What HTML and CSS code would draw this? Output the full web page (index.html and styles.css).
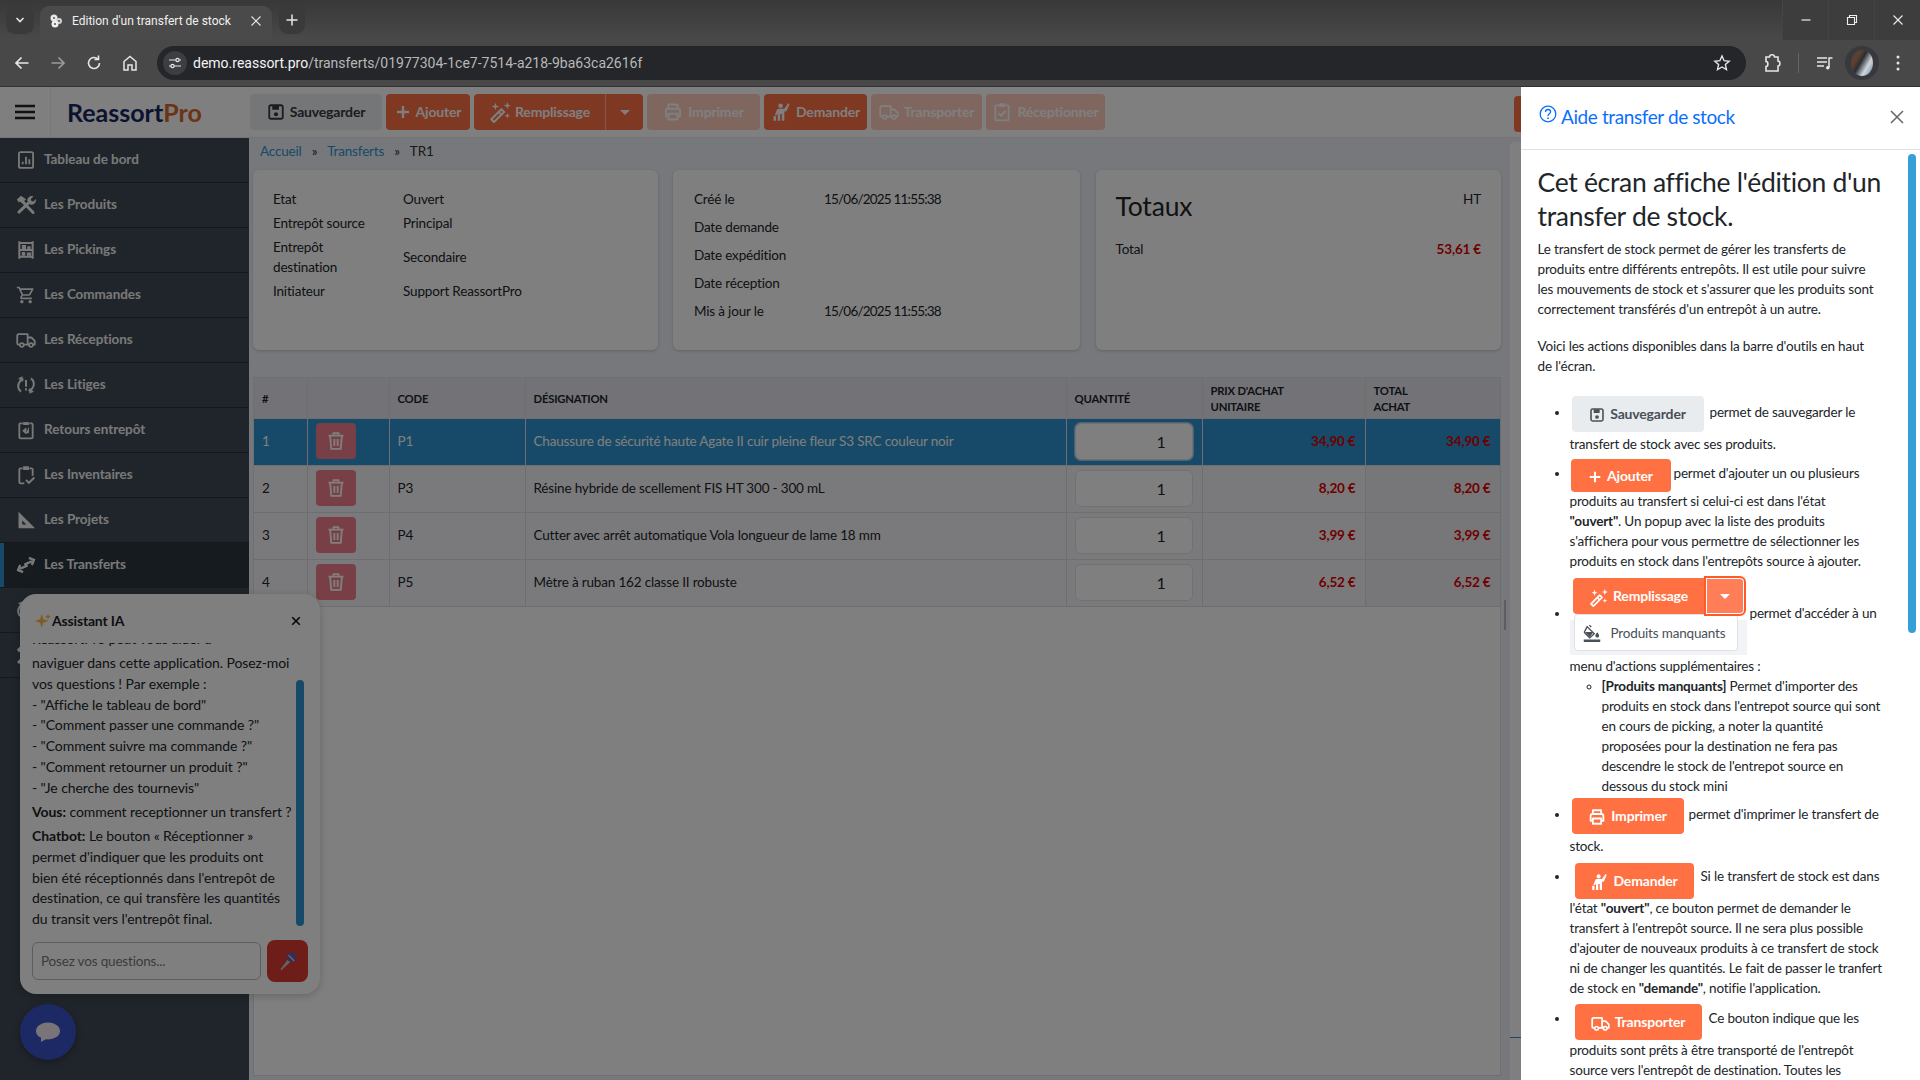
FILE: index.html
```html
<!DOCTYPE html>
<html lang="fr">
<head>
<meta charset="utf-8">
<title>Edition d'un transfert de stock</title>
<link rel="stylesheet" href="styles.css">
</head>
<body>
<svg class="sprite" xmlns="http://www.w3.org/2000/svg">
  <symbol id="i-chart" viewBox="0 0 24 24"><rect x="3.5" y="2.5" width="17" height="19" rx="2" fill="none" stroke="currentColor" stroke-width="2.2"/><path d="M8 17v-3M12 17V8M16 17v-6" stroke="currentColor" stroke-width="2.2" fill="none"/></symbol>
  <symbol id="i-tools" viewBox="0 0 24 24"><path d="M7 7 20.500 21" stroke="currentColor" stroke-width="3.600" fill="none" stroke-linecap="round"/><path d="M16 8.500 3.500 20.500" stroke="currentColor" stroke-width="3.600" fill="none" stroke-linecap="round"/><path d="M1 5.500 6 .8 12 5 7.500 9.800l-2.500-2-1.500 1.200z" fill="currentColor"/><path d="M13.500 7c0-3.700 3.500-6.500 7.500-5.500l-3.200 3.200.7 2.400 2.400.7 3-3c.8 4-2.500 7.500-6.500 6.800z" fill="currentColor"/></symbol>
  <symbol id="i-shelf" viewBox="0 0 24 24"><path d="M4 1.500v21M20 1.500v21M4 3.500h16M4 12h16M4 20h16" stroke="currentColor" stroke-width="2.400" fill="none"/><path d="M7 6h5v5H7zM13.500 7.500h4V11h-4zM7 14.500h4V19H7zM13 15h5v4h-5z" fill="currentColor"/></symbol>
  <symbol id="i-cart" viewBox="0 0 24 24"><path fill="currentColor" d="M15.550 13c.750 0 1.410-.410 1.750-1.030l3.580-6.490A.996.996 0 0 0 20.010 4H5.210l-.940-2H1v2h2l3.600 7.590-1.350 2.440C4.520 15.370 5.480 17 7 17h12v-2H7l1.100-2h7.450zM6.160 6h12.150l-2.760 5H8.530L6.160 6zM7 18c-1.100 0-1.990.900-1.990 2S5.900 22 7 22s2-.900 2-2-.900-2-2-2zm10 0c-1.100 0-1.990.900-1.990 2s.890 2 1.990 2 2-.900 2-2-.900-2-2-2z"/></symbol>
  <symbol id="i-truck" viewBox="0 0 24 24"><path d="M5 17.500H3a1.500 1.500 0 0 1-1.500-1.500V6.500A1.500 1.500 0 0 1 3 5h11v12.500H9M14 9h4.500l4 4v4.500h-2.500M14 17.500h2" fill="none" stroke="currentColor" stroke-width="2.200" stroke-linejoin="round"/><circle cx="7" cy="18" r="2.300" fill="none" stroke="currentColor" stroke-width="2"/><circle cx="18" cy="18" r="2.300" fill="none" stroke="currentColor" stroke-width="2"/></symbol>
  <symbol id="i-dispute" viewBox="0 0 24 24"><path d="M6 20c-4-3-4.500-8-1.500-12 1-1.500 2.500-2.500 4.500-3M18 4c4 3 4.500 8 1.500 12-1 1.500-2.500 2.500-4.500 3" fill="none" stroke="currentColor" stroke-width="2.400"/><path d="M8 1.500V8.500L2.500 4zM16 22.500V15.500l5.500 4.500z" fill="currentColor"/><path d="M12 6v8M12 16v2.500" stroke="currentColor" stroke-width="2.400"/></symbol>
  <symbol id="i-return" viewBox="0 0 24 24"><path d="M8 4H5.500A1.500 1.500 0 0 0 4 5.500v15A1.500 1.500 0 0 0 5.500 22h13a1.500 1.500 0 0 0 1.500-1.500v-15A1.500 1.500 0 0 0 18.500 4H16" fill="none" stroke="currentColor" stroke-width="2.200"/><path d="M8.500 2.500h7v3.500h-7z" fill="currentColor"/><path d="M15 9v6.500h-3M12 9.500 8 13l4 3.500z" fill="currentColor" stroke="currentColor" stroke-width="1"/></symbol>
  <symbol id="i-inv" viewBox="0 0 24 24"><path d="M8 4H5.500A1.500 1.500 0 0 0 4 5.500v15A1.500 1.500 0 0 0 5.500 22H10M16 4h2.500A1.500 1.500 0 0 1 20 5.500V13" fill="none" stroke="currentColor" stroke-width="2.200"/><path d="M8.500 1.500h7V6h-7z" fill="currentColor"/><path d="m12 18 3.500 3.500L22 15" fill="none" stroke="currentColor" stroke-width="2.400"/></symbol>
  <symbol id="i-ruler" viewBox="0 0 24 24"><path d="M3 2v20h20zM7.500 12.500v5h5z" fill="currentColor" fill-rule="evenodd"/></symbol>
  <symbol id="i-swap" viewBox="0 0 24 24"><path d="M10 11.500 19 7.500M15.500 3.500 21.500 6 19 12M14 12.500 5 16.500M8.500 20.500 2.500 18 5 12" stroke="currentColor" stroke-width="2.800" fill="none"/></symbol>
  <symbol id="i-save" viewBox="0 0 24 24"><rect x="3" y="3" width="18" height="18" rx="2.500" fill="none" stroke="currentColor" stroke-width="2.400"/><path d="M7 3.500h9v5.500H7z" fill="currentColor"/><circle cx="12" cy="15" r="2.800" fill="currentColor"/></symbol>
  <symbol id="i-plus" viewBox="0 0 24 24"><path d="M12 3v18M3 12h18" stroke="currentColor" stroke-width="3.600" fill="none"/></symbol>
  <symbol id="i-wand" viewBox="0 0 24 24"><path d="m2.500 20 11-11 3 3-11 11z" fill="none" stroke="currentColor" stroke-width="2.200" stroke-linejoin="round"/><path d="m10.500 12 3 3" stroke="currentColor" stroke-width="2"/><path d="M7 2l1 3 3 1-3 1-1 3-1-3-3-1 3-1zM20 1l1 3 3 1-3 1-1 3-1-3-3-1 3-1zM20 13l.800 2.200 2.200.800-2.200.800-.800 2.200-.800-2.200-2.200-.800 2.200-.800z" fill="currentColor"/></symbol>
  <symbol id="i-print" viewBox="0 0 24 24"><path d="M6.500 8V3h11v5M6.500 17H3.500V10.500A2.500 2.500 0 0 1 6 8h12a2.500 2.500 0 0 1 2.500 2.500V17h-3M6.500 14h11v7h-11z" fill="none" stroke="currentColor" stroke-width="2.400" stroke-linejoin="round"/></symbol>
  <symbol id="i-ask" viewBox="0 0 24 24"><circle cx="11.500" cy="4.500" r="2.700" fill="currentColor"/><path d="m20.500 1.500 1.800.8-3.300 8c-.3.800-1.100 1.200-2 1.200H16v11h-3v-8h-2v8H8V13l-1 3H4.500l2.500-6.500C7.500 8.300 8.500 8 9.500 8H16z" fill="currentColor"/><path d="M3 17h3v5.500H3z" fill="currentColor"/></symbol>
  <symbol id="i-check" viewBox="0 0 24 24"><path d="M8 4H5.500A1.500 1.500 0 0 0 4 5.500v15A1.500 1.500 0 0 0 5.500 22h13a1.500 1.500 0 0 0 1.500-1.500v-15A1.500 1.500 0 0 0 18.500 4H16" fill="none" stroke="currentColor" stroke-width="2.200"/><path d="M8.500 1.500h7V6h-7z" fill="currentColor"/><path d="m8 13.500 3 3 5.500-6" fill="none" stroke="currentColor" stroke-width="2.400"/></symbol>
  <symbol id="i-trash" viewBox="0 0 24 24"><path d="M3 5.500h18M9 5V2.500h6V5M5 6l1.300 15.500h11.400L19 6M10 9.500v8.500M14 9.500v8.500" fill="none" stroke="currentColor" stroke-width="2.200"/></symbol>
  <symbol id="i-bucket" viewBox="0 0 24 24"><path d="M8.500 1.500 11 4M5.500 3.500 15 13l-6 5.500L2.500 12c-.8-.8-.8-1.700 0-2.500z" fill="none" stroke="currentColor" stroke-width="1.800"/><path d="M2.800 10.500h11l-4.800 7.300z" fill="currentColor"/><path d="M19 11c1.500 2 2.500 3.200 2.500 4.500a2.500 2.500 0 0 1-5 0c0-1.300 1-2.500 2.500-4.500zM1 20.500h22V24H1z" fill="currentColor"/></symbol>
  <symbol id="i-menu" viewBox="0 0 20 16"><path d="M0 2h20M0 8h20M0 14h20" stroke="currentColor" stroke-width="2.300"/></symbol>
  <symbol id="i-x" viewBox="0 0 16 16"><path d="M2 2l12 12M14 2 2 14" stroke="currentColor" stroke-width="1.500" fill="none"/></symbol>
  <symbol id="i-help" viewBox="0 0 18 18"><circle cx="9" cy="9" r="7.800" fill="none" stroke="currentColor" stroke-width="1.300"/><path d="M6.500 7c0-1.500 1.100-2.500 2.600-2.500S11.600 5.400 11.600 6.800c0 2-2.600 2-2.600 4.200" fill="none" stroke="currentColor" stroke-width="1.300"/><circle cx="9" cy="13.200" r=".9" fill="currentColor"/></symbol>
</svg>

<div class="browser">
  <div class="tabstrip">
    <span class="round-btn tab-list"><svg width="12" height="12" viewBox="0 0 12 12"><path d="m2.500 4 3.500 3.500L9.500 4" fill="none" stroke="#e6e6e6" stroke-width="1.600"/></svg></span>
    <div class="tab">
      <svg class="favicon" width="16" height="16" viewBox="0 0 16 16"><circle cx="6" cy="5" r="3.500" fill="#e8e8e8"/><circle cx="11" cy="8" r="3" fill="#cfd4d0"/><circle cx="7" cy="11" r="3.500" fill="#f0f0f0"/><circle cx="6" cy="5" r="1" fill="#555"/><circle cx="11" cy="8" r="1" fill="#555"/><circle cx="7" cy="11" r="1" fill="#555"/></svg>
      <span class="tab-title">Edition d'un transfert de stock</span>
      <svg class="tab-close" width="12" height="12"><use href="#i-x"/></svg>
    </div>
    <span class="round-btn new-tab"><svg width="14" height="14" viewBox="0 0 14 14"><path d="M7 1.500v11M1.500 7h11" stroke="#e6e6e6" stroke-width="1.500"/></svg></span>
    <div class="win-controls">
      <span class="win-btn"><svg width="12" height="12" viewBox="0 0 12 12"><path d="M1.500 6h9" stroke="#eee" stroke-width="1.200"/></svg></span>
      <span class="win-btn"><svg width="12" height="12" viewBox="0 0 12 12"><path d="M1.500 3.500h7v7h-7zM3.500 3.500v-2h7v7h-2" fill="none" stroke="#eee" stroke-width="1.100"/></svg></span>
      <span class="win-btn"><svg class="win-x" width="12" height="12"><use href="#i-x"/></svg></span>
    </div>
  </div>
  <div class="toolbar">
    <svg class="nav-ic" width="18" height="18" viewBox="0 0 18 18"><path d="M15.500 9h-12M8.500 3.500 3 9l5.500 5.500" fill="none" stroke="#e6e6e6" stroke-width="1.700"/></svg>
    <svg class="nav-ic dim" width="18" height="18" viewBox="0 0 18 18"><path d="M2.500 9h12M9.500 3.500 15 9l-5.500 5.500" fill="none" stroke="#9a9a9a" stroke-width="1.700"/></svg>
    <svg class="nav-ic" width="18" height="18" viewBox="0 0 18 18"><path d="M14.500 9a5.500 5.500 0 1 1-1.700-4M13.500 1.500V5.500H9.500" fill="none" stroke="#e6e6e6" stroke-width="1.600"/></svg>
    <svg class="nav-ic" width="18" height="18" viewBox="0 0 18 18"><path d="M3 16V7.500L9 2.500l6 5V16h-4v-5H7v5z" fill="none" stroke="#e6e6e6" stroke-width="1.500"/></svg>
    <div class="omnibox">
      <span class="site-btn"><svg width="14" height="14" viewBox="0 0 14 14"><path d="M1 4h7M11 4h2M1 10h2M6 10h7" stroke="#e6e6e6" stroke-width="1.200"/><circle cx="9.500" cy="4" r="1.600" fill="none" stroke="#e6e6e6" stroke-width="1.200"/><circle cx="4.500" cy="10" r="1.600" fill="none" stroke="#e6e6e6" stroke-width="1.200"/></svg></span>
      <span class="url"><b>demo.reassort.pro</b>/transferts/01977304-1ce7-7514-a218-9ba63ca2616f</span>
      <svg class="star" width="18" height="18" viewBox="0 0 18 18"><path d="m9 2 2.100 4.700 5.100.5-3.800 3.400 1.100 5L9 13l-4.500 2.600 1.100-5L1.800 7.200l5.100-.5z" fill="none" stroke="#e6e6e6" stroke-width="1.400"/></svg>
    </div>
    <svg class="tool-ic puzzle" width="18" height="20" viewBox="0 0 18 20"><path d="M3 4h3.500c0-3 5-3 5 0H15v4c2.500 0 2.500 5 0 5v5H3v-4.500c2.500 0 2.500-5 0-5z" fill="none" stroke="#e6e6e6" stroke-width="1.600"/></svg>
    <span class="tool-sep"></span>
    <svg class="tool-ic media" width="18" height="18" viewBox="0 0 18 18"><path d="M1 4h10M1 8h10M1 12h7" stroke="#e6e6e6" stroke-width="1.500"/><path d="M13 13.500V4h3.500" stroke="#e6e6e6" stroke-width="1.500" fill="none"/><circle cx="11.800" cy="13.800" r="1.800" fill="#e6e6e6"/></svg>
    <span class="avatar-wrap"><span class="avatar"></span></span>
    <svg class="tool-ic kebab" width="4" height="16" viewBox="0 0 4 16"><circle cx="2" cy="2" r="1.500" fill="#e6e6e6"/><circle cx="2" cy="8" r="1.500" fill="#e6e6e6"/><circle cx="2" cy="14" r="1.500" fill="#e6e6e6"/></svg>
  </div>
</div>

<div class="page">
  <div class="app">
    <header class="app-head">
      <div class="brand">
        <span class="burger"><svg width="20" height="16"><use href="#i-menu"/></svg></span>
        <span class="logo">Reassort<em>Pro</em></span>
      </div>
      <div class="actions">
        <span class="btn btn-gray w-save"><svg width="18" height="18"><use href="#i-save"/></svg>Sauvegarder</span>
        <span class="btn w-add"><svg width="16" height="16"><use href="#i-plus"/></svg>Ajouter</span>
        <span class="split">
          <span class="btn split-main"><svg width="22" height="22"><use href="#i-wand"/></svg>Remplissage</span>
          <span class="btn split-caret"><i class="caret"></i></span>
        </span>
        <span class="btn off w-print"><svg width="20" height="20"><use href="#i-print"/></svg>Imprimer</span>
        <span class="btn w-ask"><svg width="20" height="20"><use href="#i-ask"/></svg>Demander</span>
        <span class="btn off w-move"><svg width="20" height="20"><use href="#i-truck"/></svg>Transporter</span>
        <span class="btn off w-recv"><svg width="20" height="20"><use href="#i-check"/></svg>Réceptionner</span>
        <span class="btn help-peek"></span>
      </div>
    </header>
    <div class="app-body">
      <nav class="sidebar">
        <a class="nav-row"><svg width="20" height="20"><use href="#i-chart"/></svg><span>Tableau de bord</span></a>
        <a class="nav-row"><svg width="20" height="20"><use href="#i-tools"/></svg><span>Les Produits</span></a>
        <a class="nav-row"><svg width="20" height="20"><use href="#i-shelf"/></svg><span>Les Pickings</span></a>
        <a class="nav-row"><svg width="20" height="20"><use href="#i-cart"/></svg><span>Les Commandes</span></a>
        <a class="nav-row"><svg width="20" height="20"><use href="#i-truck"/></svg><span>Les Réceptions</span></a>
        <a class="nav-row"><svg width="20" height="20"><use href="#i-dispute"/></svg><span>Les Litiges</span></a>
        <a class="nav-row"><svg width="20" height="20"><use href="#i-return"/></svg><span>Retours entrepôt</span></a>
        <a class="nav-row"><svg width="20" height="20"><use href="#i-inv"/></svg><span>Les Inventaires</span></a>
        <a class="nav-row"><svg width="20" height="20"><use href="#i-ruler"/></svg><span>Les Projets</span></a>
        <a class="nav-row active"><svg width="20" height="20"><use href="#i-swap"/></svg><span>Les Transferts</span></a>
        <a class="nav-row"><svg width="20" height="20"><use href="#i-dispute"/></svg></a>
        <a class="nav-row"><svg width="20" height="20"><use href="#i-tools"/></svg></a>
      </nav>
      <main class="content">
        <div class="workspace">
          <div class="crumbs"><a>Accueil</a><span class="sep">»</span><a>Transferts</a><span class="sep">»</span><span>TR1</span></div>
          <div class="cards">
            <section class="card">
              <table class="info info-a">
                <tr><td>Etat</td><td>Ouvert</td></tr>
                <tr><td>Entrepôt source</td><td>Principal</td></tr>
                <tr><td>Entrepôt<br>destination</td><td>Secondaire</td></tr>
                <tr><td>Initiateur</td><td>Support ReassortPro</td></tr>
              </table>
            </section>
            <section class="card">
              <table class="info info-b">
                <tr><td>Créé le</td><td class="date">15/06/2025 11:55:38</td></tr>
                <tr><td>Date demande</td><td></td></tr>
                <tr><td>Date expédition</td><td></td></tr>
                <tr><td>Date réception</td><td></td></tr>
                <tr><td>Mis à jour le</td><td class="date">15/06/2025 11:55:38</td></tr>
              </table>
            </section>
            <section class="card totals">
              <div class="totals-head"><h2>Totaux</h2><span>HT</span></div>
              <div class="totals-row"><span>Total</span><b class="price">53,61 €</b></div>
            </section>
          </div>
          <section class="lines">
            <table class="grid">
              <colgroup><col class="c1"><col class="c2"><col class="c3"><col class="c4"><col class="c5"><col class="c6"><col class="c7"></colgroup>
              <thead><tr><th>#</th><th></th><th>CODE</th><th>DÉSIGNATION</th><th>QUANTITÉ</th><th>PRIX D'ACHAT<br>UNITAIRE</th><th>TOTAL<br>ACHAT</th></tr></thead>
              <tbody>
                <tr class="sel"><td>1</td><td><span class="del"><svg width="20" height="20"><use href="#i-trash"/></svg></span></td><td>P1</td><td>Chaussure de sécurité haute Agate II cuir pleine fleur S3 SRC couleur noir</td><td><span class="qty focus">1</span></td><td class="price num">34,90 €</td><td class="price num">34,90 €</td></tr>
                <tr><td>2</td><td><span class="del"><svg width="20" height="20"><use href="#i-trash"/></svg></span></td><td>P3</td><td>Résine hybride de scellement FIS HT 300 - 300 mL</td><td><span class="qty">1</span></td><td class="price num">8,20 €</td><td class="price num">8,20 €</td></tr>
                <tr><td>3</td><td><span class="del"><svg width="20" height="20"><use href="#i-trash"/></svg></span></td><td>P4</td><td>Cutter avec arrêt automatique Vola longueur de lame 18 mm</td><td><span class="qty">1</span></td><td class="price num">3,99 €</td><td class="price num">3,99 €</td></tr>
                <tr><td>4</td><td><span class="del"><svg width="20" height="20"><use href="#i-trash"/></svg></span></td><td>P5</td><td>Mètre à ruban 162 classe II robuste</td><td><span class="qty">1</span></td><td class="price num">6,52 €</td><td class="price num">6,52 €</td></tr>
              </tbody>
            </table>
          </section>
        </div>
        <div class="side-strip"><span class="strip-mark"></span><span class="strip-line"></span></div>
      </main>
    </div>
  </div>

  <aside class="chat">
    <div class="chat-head"><span class="chat-title"><svg width="16" height="16" viewBox="0 0 24 24"><path d="M10 2l2.500 7.500L20 12l-7.500 2.500L10 22l-2.500-7.500L0 12l7.500-2.500zM19.500 1l1.200 3.300L24 5.500l-3.300 1.200L19.500 10l-1.200-3.300L15 5.500l3.300-1.200z" fill="#ffb74d"/></svg>Assistant IA</span><svg class="chat-x" width="10" height="10" viewBox="0 0 16 16"><path d="M2 2l12 12M14 2 2 14" stroke="#111" stroke-width="2.600"/></svg></div>
    <div class="chat-log">
      <div class="chat-scroll">
        <p class="clip-line">ReassortPro peut vous aider à</p>
        <p>naviguer dans cette application. Posez-moi<br>vos questions ! Par exemple :<br>- "Affiche le tableau de bord"<br>- "Comment passer une commande ?"<br>- "Comment suivre ma commande ?"<br>- "Comment retourner un produit ?"<br>- "Je cherche des tournevis"</p>
        <p><b>Vous:</b> comment receptionner un transfert ?</p>
        <p><b>Chatbot:</b> Le bouton « Réceptionner »<br>permet d'indiquer que les produits ont<br>bien été réceptionnés dans l'entrepôt de<br>destination, ce qui transfère les quantités<br>du transit vers l'entrepôt final.</p>
      </div>
      <span class="chat-thumb"></span>
    </div>
    <div class="chat-input">
      <span class="chat-field">Posez vos questions...</span>
      <span class="mic"><svg width="20" height="20" viewBox="0 0 24 24"><path d="M3 22 12 10l3 3-11 10z" fill="#c7ccd0"/><circle cx="16.500" cy="7.500" r="6" fill="#6a5aa8"/><path d="m12.500 5 7 7" stroke="#d8d8e8" stroke-width="1.500"/></svg></span>
    </div>
  </aside>
  <span class="chat-fab"><svg width="26" height="20" viewBox="0 0 26 20"><ellipse cx="13" cy="9" rx="12" ry="8.500" fill="#f2e9ee"/><path d="M6 14v6l7-4z" fill="#f2e9ee"/></svg></span>

  <div class="backdrop"></div>

  <aside class="help">
    <header class="help-head">
      <h5><svg width="18" height="18"><use href="#i-help"/></svg>Aide transfer de stock</h5>
      <svg class="help-x" width="16" height="16"><use href="#i-x"/></svg>
    </header>
    <div class="help-body">
      <h3>Cet écran affiche l'édition d'un<br>transfer de stock.</h3>
      <p>Le transfert de stock permet de gérer les transferts de<br>produits entre différents entrepôts. Il est utile pour suivre<br>les mouvements de stock et s'assurer que les produits sont<br>correctement transférés d'un entrepôt à un autre.</p>
      <p class="p-gap">Voici les actions disponibles dans la barre d'outils en haut<br>de l'écran.</p>
      <ul class="help-list">
        <li class="li-save"><span class="hb hb-gray hb-save"><svg width="16" height="16"><use href="#i-save"/></svg>Sauvegarder</span>permet de sauvegarder le<br>transfert de stock avec ses produits.</li>
        <li class="li-add"><span class="hb hb-add"><svg width="14" height="14"><use href="#i-plus"/></svg>Ajouter</span>permet d'ajouter un ou plusieurs<br>produits au transfert si celui-ci est dans l'état<br><b>"ouvert"</b>. Un popup avec la liste des produits<br>s'affichera pour vous permettre de sélectionner les<br>produits en stock dans l'entrepôts source à ajouter.</li>
        <li class="li-fill"><span class="shot">
            <span class="shot-top"><span class="hb hb-fill"><svg width="19" height="19"><use href="#i-wand"/></svg>Remplissage</span><span class="hb hb-caret"><i class="caret"></i></span></span>
            <span class="shot-menu"><svg width="18" height="20"><use href="#i-bucket"/></svg>Produits manquants</span>
          </span>permet d'accéder à un<br>menu d'actions supplémentaires :
          <ul><li><b>[Produits manquants]</b> Permet d'importer des<br>produits en stock dans l'entrepot source qui sont<br>en cours de picking, a noter la quantité<br>proposées pour la destination ne fera pas<br>descendre le stock de l'entrepot source en<br>dessous du stock mini</li></ul>
        </li>
        <li class="li-print"><span class="hb hb-print"><svg width="18" height="18"><use href="#i-print"/></svg>Imprimer</span>permet d'imprimer le transfert de<br>stock.</li>
        <li class="li-ask"><span class="hb hb-ask"><svg width="18" height="18"><use href="#i-ask"/></svg>Demander</span>Si le transfert de stock est dans<br>l'état <b>"ouvert"</b>, ce bouton permet de demander le<br>transfert à l'entrepôt source. Il ne sera plus possible<br>d'ajouter de nouveaux produits à ce transfert de stock<br>ni de changer les quantités. Le fait de passer le tranfert<br>de stock en <b>"demande"</b>, notifie l'application.</li>
        <li class="li-move"><span class="hb hb-move"><svg width="19" height="19"><use href="#i-truck"/></svg>Transporter</span>Ce bouton indique que les<br>produits sont prêts à être transporté de l'entrepôt<br>source vers l'entrepôt de destination. Toutes les</li>
      </ul>
    </div>
    <span class="help-thumb"></span>
  </aside>
</div>
</body>
</html>
```

FILE: styles.css
```css
* { box-sizing: border-box; }
html, body { margin: 0; height: 100%; overflow: hidden; }
body { width: 1920px; height: 1080px; display: flex; flex-direction: column; font: 13.500px/20px Lato, "Noto Sans", sans-serif; letter-spacing: -.17px; color: #212529; background: #fff; }
p, h2, h3, h5, ul { margin: 0; padding: 0; }
.sprite { position: absolute; width: 0; height: 0; }

/* browser chrome */
.browser { flex: 0 0 87px; font-family: Roboto, "Noto Sans", sans-serif; letter-spacing: 0; }
.tabstrip { height: 40px; display: flex; align-items: flex-end; background: linear-gradient(#383838, #494949); }
.round-btn { width: 28px; height: 28px; border-radius: 9px; background: #3a3a3a; display: flex; align-items: center; justify-content: center; align-self: flex-start; margin-top: 6px; }
.tab-list { margin-left: 6px; }
.tab { width: 232px; height: 34px; margin-left: 6px; padding: 0 10px 4px 8px; border-radius: 9px 9px 0 0; background: #4a4a4a; display: flex; align-items: center; color: #f0f0f0; font-size: 12px; }
.tab-title { flex: 1; white-space: nowrap; }
.favicon { flex: none; margin-right: 8px; }
.tab-close { color: #e6e6e6; flex: none; }
.new-tab { margin-left: 7px; width: 26px; }
.win-controls { margin-left: auto; align-self: stretch; display: flex; background: #3d3d3d; }
.win-btn { width: 46px; display: flex; align-items: center; justify-content: center; border-left: 1px solid #444; }
.win-x { color: #eee; }
.toolbar { height: 47px; padding: 6px 0 7px 13px; background: #484848; border-bottom: 1px solid #333; display: flex; align-items: center; }
.nav-ic { margin-right: 18px; flex: none; }
.omnibox { width: 1589px; height: 34px; border-radius: 17px; background: #24262a; display: flex; align-items: center; padding-left: 6px; }
.site-btn { width: 24px; height: 24px; border-radius: 50%; background: #3c3e42; display: flex; align-items: center; justify-content: center; }
.url { margin-left: 6px; font-size: 14px; color: #b8b8b8; white-space: nowrap; }
.url b { font-weight: 400; color: #f4f4f4; }
.star { margin-left: auto; margin-right: 15px; }
.puzzle { margin-left: 17px; }
.tool-sep { width: 1px; height: 20px; background: #666; margin: 0 17px; }
.media { margin-right: 11px; }
.avatar-wrap { width: 34px; height: 34px; border-radius: 50%; background: #38393c; display: flex; align-items: center; justify-content: center; }
.avatar { width: 22px; height: 26px; border-radius: 50%; background: linear-gradient(120deg, #5a4030 0 30%, #2a2d33 45%, #cfd6dc 70%, #6d7f96); }
.kebab { margin-left: 17px; }

/* page */
.page { position: relative; flex: 1; min-height: 0; overflow: hidden; }
.app { height: 100%; display: flex; flex-direction: column; background: #eef0f7; }
.app-head { flex: 0 0 51px; display: flex; background: #fff; border-bottom: 1px solid #e8e8e8; }
.brand { width: 250px; display: flex; align-items: center; flex: none; }
.burger { width: 51px; height: 100%; display: flex; align-items: center; justify-content: center; border-right: 1px solid #eee; color: #222; }
.logo { margin-left: 16px; font-size: 25px; font-weight: 700; letter-spacing: 0; color: #17275f; }
.logo em { font-style: normal; color: #d8682e; }
.actions { flex: 1; display: flex; gap: 4px; padding-top: 7px; min-width: 0; }
.btn { height: 36px; border-radius: 4px; background: #ff7043; color: #fff; font-size: 14px; font-weight: 700; display: inline-flex; align-items: center; justify-content: center; gap: 5px; flex: none; }
.btn-gray { background: #e9ecef; color: #343a40; }
.w-save { width: 132px; }
.w-add { width: 84px; }
.split { display: flex; flex: none; }
.split-main { width: 132px; gap: 4px; border-radius: 4px 0 0 4px; border-right: 1px solid #ffb39b; }
.split-caret { width: 37px; border-radius: 0 4px 4px 0; }
.caret { width: 0; height: 0; border: 5px solid transparent; border-top-color: #fff; border-bottom: 0; }
.w-print { width: 113px; }
.w-ask { width: 103px; }
.w-move { width: 111px; }
.w-recv { width: 119px; }
.off { opacity: .35; }
.help-peek { width: 106px; margin-left: auto; margin-right: 300px; margin-top: 2px; }
.app-body { flex: 1; min-height: 0; display: flex; }

.sidebar { width: 249px; flex: none; background: #3e4a54; }
.nav-row { height: 45px; display: flex; align-items: center; gap: 8px; padding-left: 16px; border-bottom: 1px solid #2a333a; color: #f2f2f2; font-weight: 700; letter-spacing: -.05px; white-space: nowrap; }
.nav-row span { margin-top: -2px; }
.nav-row svg { flex: none; }
.nav-row.active { background: #2c363e; box-shadow: inset 4px 0 0 #2f94d0; }

.content { flex: 1; min-width: 0; display: flex; }
.workspace { width: 1252px; flex: none; padding: 0 0 4px 4px; display: flex; flex-direction: column; }
.crumbs { height: 32px; padding: 0 0 6px 7px; display: flex; align-items: center; color: #333; }
.crumbs a { color: #2f94d0; }
.crumbs .sep { margin: 0 10px; }
.cards { height: 180px; display: grid; grid-template-columns: 404.500px 407px 405.500px; column-gap: 15.500px; }
.card { background: #fff; border-radius: 6px; box-shadow: 0 1px 3px rgba(0,0,0,.18); }
.info { border-collapse: collapse; }
.info-a { margin: 17px 0 0 20px; }
.info-a td { padding: 2px 0; }
.info-a td:first-child { width: 130px; }
.info-b { margin: 15px 0 0 21px; }
.info-b td { height: 28px; padding: 0; }
.info-b td:first-child { width: 130px; }
.info-b .date { letter-spacing: -.8px; }
.totals { padding: 17px 20px 0 20px; }
.totals-head { display: flex; justify-content: space-between; align-items: flex-start; height: 43px; padding-top: 2px; }
.totals-head h2 { font-size: 26.500px; line-height: 34px; font-weight: 400; }
.totals-head span { line-height: 20px; }
.totals-row { display: flex; justify-content: space-between; margin-top: 9px; }
.price { color: #e00000; font-weight: 700; }
.lines { margin-top: 27px; flex: 1; background: #fff; border: 1px solid #dedfe4; }
.grid { width: 1246px; table-layout: fixed; border-collapse: collapse; }
.c1 { width: 53px; } .c2 { width: 82px; } .c3 { width: 136px; } .c4 { width: 541px; } .c5 { width: 136px; } .c6 { width: 163px; } .c7 { width: 135px; }
.grid th { height: 40px; padding: 2px 8px 0; text-align: left; font-size: 11.300px; letter-spacing: -.2px; line-height: 16px; font-weight: 700; background: #e6e7ee; border-right: 1px solid #dcdde3; border-bottom: 1px solid #dcdde3; }
.grid td { height: 47px; padding: 0 8px 1px; background: #f5f5f8; border-right: 1px solid #dcdde3; border-bottom: 1px solid #dcdde3; white-space: nowrap; }
.grid td:last-child { background: #eeeef2; }
.grid .sel td { background: #2e94d0; color: #fff; }
.grid .sel td.price { color: #d80000; }
.grid .num { text-align: right; padding-right: 9px; }
.del { width: 40px; height: 36px; border-radius: 4px; background: #f0818c; color: #fff; display: flex; align-items: center; justify-content: center; }
.qty { width: 118px; height: 37px; border-radius: 6px; border: 1px solid #dee2e6; background: #fff; color: #212529; display: block; text-align: right; padding-right: 26px; font-size: 16px; font-weight: 400; line-height: 35px; }
.qty.focus { box-shadow: 0 0 0 1px #9dc4e0; }
.side-strip { position: relative; flex: 1; margin: 4px 0 0 9px; background: #fff; border-radius: 4px 0 0 0; display: flex; flex-direction: column; justify-content: flex-end; padding-bottom: 42px; }
.strip-line { height: 1px; background: #2f94d0; }
.strip-mark { position: absolute; left: -6px; top: 458px; width: 2px; height: 30px; background: #bbb; }

/* chat */
.chat { position: absolute; left: 20px; top: 507px; width: 300px; height: 400px; border-radius: 16px; background: #fff; box-shadow: 0 2px 8px rgba(0,0,0,.2); padding: 0 12px 0 12px; display: flex; flex-direction: column; }
.chat-head { height: 49px; flex: none; display: flex; align-items: center; justify-content: space-between; padding: 4px 7px 0 3px; font-weight: 700; font-size: 14px; }
.chat-title { display: flex; align-items: center; gap: 1px; color: #1c2024; }
.chat-log { position: relative; height: 287px; flex: none; overflow: hidden; }
.chat-scroll { margin-top: -14px; font-size: 14px; letter-spacing: -.08px; line-height: 20.700px; white-space: nowrap; }
.chat-scroll p { margin: 0 0 3.600px; }
.chat-thumb { position: absolute; right: 4px; top: 37px; width: 8px; height: 246px; border-radius: 4px; background: #2f94d0; }
.chat-input { display: flex; gap: 6px; align-items: center; height: 42px; margin-top: 10px; }
.chat-field { width: 229px; height: 38px; border: 1px solid #bbb; border-radius: 6px; padding-left: 8px; line-height: 36px; color: #777; font-size: 13.500px; }
.mic { width: 41px; height: 42px; border-radius: 8px; background: #dc3a30; display: flex; align-items: center; justify-content: center; }
.chat-fab { position: absolute; left: 20px; top: 917px; width: 56px; height: 56px; border-radius: 50%; background: #3a52c8; display: flex; align-items: center; justify-content: center; box-shadow: 0 2px 6px rgba(0,0,0,.3); }

.backdrop { position: absolute; inset: 0; background: rgba(0,0,0,.5); }

/* help panel */
.help { position: absolute; top: 0; right: 0; bottom: 0; width: 399px; background: #fff; display: flex; flex-direction: column; }
.help-head { flex: 0 0 63px; display: flex; align-items: center; justify-content: space-between; padding: 0 15px 2px 18px; border-bottom: 1px solid #dee2e6; }
.help-head h5 { font-size: 19px; letter-spacing: -.4px; font-weight: 400; line-height: 24px; color: #0d6efd; display: flex; align-items: center; gap: 4px; }
.help-head h5 svg { margin-top: -6px; }
.help-x { color: #666; }
.help-body { flex: 1; min-height: 0; overflow: hidden; padding: 15px 0 0 16.500px; white-space: nowrap; }
.help-body h3 { font-size: 26.500px; letter-spacing: -.3px; line-height: 34px; font-weight: 400; color: #212529; }
.help-body h3 + p { margin-top: 6px; }
.p-gap { margin-top: 17px; }
.help-list { padding-left: 32px; margin-top: 20px; }
.help-list > li { list-style: disc; }
.help-list ul { padding-left: 32px; }
.help-list ul li { list-style: circle; }
.hb { display: inline-block; overflow: hidden; height: 36px; line-height: 36px; text-align: center; border-radius: 4px; background: #ff7043; color: #fff; font-size: 14px; font-weight: 700; }
.hb svg { vertical-align: middle; margin-right: 5px; }
.hb-gray { background: #e9ecef; color: #495057; }
.hb-save { width: 132px; margin: 0 6px 2px 2px; vertical-align: -17.500px; }
.li-add { margin-top: 5px; }
.hb-add { width: 100px; height: 33px; line-height: 33px; margin: 0 3px -1px 1px; vertical-align: -13.500px; }
.li-fill { margin-top: 3px; }
.shot { display: inline-block; width: 177px; height: 81px; padding-top: 4px; margin: 0 3px 1px 0; overflow: hidden; vertical-align: -37.800px; background: linear-gradient(#fff 46px, #f2f3f7 46px); }
.shot-top { display: flex; padding-left: 3px; }
.hb-fill { width: 132px; border-radius: 4px 0 0 4px; flex: none; }
.hb-caret { width: 38px; flex: none; margin-left: 1px; border-radius: 0 4px 4px 0; background: #ff7e57; overflow: visible; outline: 2px solid #ff5a2c; display: flex; align-items: center; justify-content: center; box-shadow: inset 0 0 0 1px #fff; }
.shot-menu { display: flex; align-items: center; height: 37px; width: 164px; margin-left: 4px; padding-left: 8px; gap: 10px; background: #fff; border: 1px solid #dee2e6; border-radius: 4px; color: #495057; white-space: nowrap; }
.li-print { margin-top: 2px; }
.hb-print { width: 112px; margin: 0 5px 2px 2px; vertical-align: -17.500px; }
.li-ask { margin-top: 7px; }
.hb-ask { width: 119px; margin: 0 7px -1px 5px; vertical-align: -17px; }
.li-move { margin-top: 6px; }
.hb-move { width: 127px; margin: 0 7px 0 5px; vertical-align: -17px; }
.help-thumb { position: absolute; right: 4px; top: 67px; width: 8px; height: 479px; border-radius: 4px; background: #35a0d8; }
```
